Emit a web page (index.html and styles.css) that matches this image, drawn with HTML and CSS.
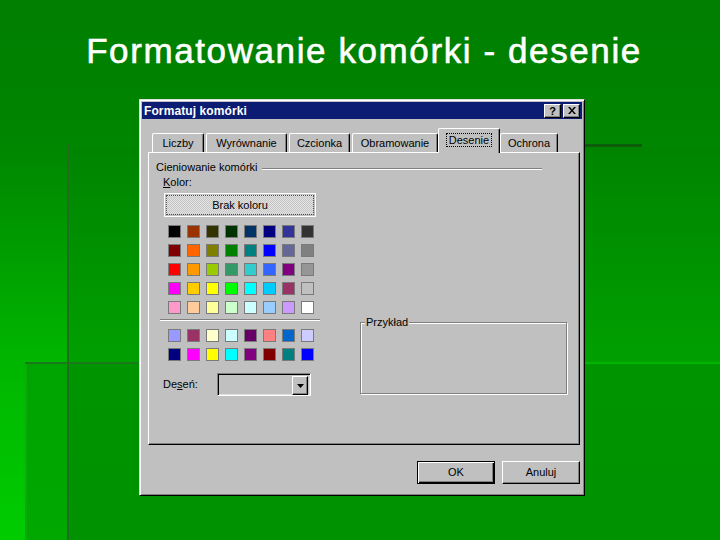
FILE: index.html
```html
<!DOCTYPE html>
<html lang="pl">
<head>
<meta charset="utf-8">
<link rel="stylesheet" href="styles.css">
</head>
<body>
<h1 class="slide-title">Formatowanie komórki - desenie</h1>
<div class="dialog">
  <div class="titlebar">
    <span class="title">Formatuj komórki</span>
    <div class="tb-buttons">
      <span class="tb-btn help">?</span>
      <span class="tb-btn close"><svg width="8" height="7" viewBox="0 0 8 7"><path d="M0 0h2l2 2.5L6 0h2L5 3.5 8 7H6L4 4.5 2 7H0l3-3.5z" fill="#000"/></svg></span>
    </div>
  </div>
  <div class="dlg-body">
    <div class="tabs">
      <div class="tab t-liczby">Liczby</div>
      <div class="tab t-wyr">Wyrównanie</div>
      <div class="tab t-czc">Czcionka</div>
      <div class="tab t-obr">Obramowanie</div>
      <div class="tab t-des active"><span class="focus">Desenie</span></div>
      <div class="tab t-och">Ochrona</div>
    </div>
    <div class="panel">
      <div class="group-head"><span class="group-title">Cieniowanie komórki</span><span class="etch"></span></div>
      <div class="content">
        <div class="left">
          <div class="lbl kolor"><u>K</u>olor:</div>
          <div class="nocolor"><div class="nocolor-in">Brak koloru</div></div>
          <div class="swatches main">
            <span class="sw" style="background:#000000"></span>
            <span class="sw" style="background:#993300"></span>
            <span class="sw" style="background:#333300"></span>
            <span class="sw" style="background:#003300"></span>
            <span class="sw" style="background:#003366"></span>
            <span class="sw" style="background:#000080"></span>
            <span class="sw" style="background:#333399"></span>
            <span class="sw" style="background:#333333"></span>
            <span class="sw" style="background:#800000"></span>
            <span class="sw" style="background:#ff6600"></span>
            <span class="sw" style="background:#808000"></span>
            <span class="sw" style="background:#008000"></span>
            <span class="sw" style="background:#008080"></span>
            <span class="sw" style="background:#0000ff"></span>
            <span class="sw" style="background:#666699"></span>
            <span class="sw" style="background:#808080"></span>
            <span class="sw" style="background:#ff0000"></span>
            <span class="sw" style="background:#ff9900"></span>
            <span class="sw" style="background:#99cc00"></span>
            <span class="sw" style="background:#339966"></span>
            <span class="sw" style="background:#33cccc"></span>
            <span class="sw" style="background:#3366ff"></span>
            <span class="sw" style="background:#800080"></span>
            <span class="sw" style="background:#969696"></span>
            <span class="sw" style="background:#ff00ff"></span>
            <span class="sw" style="background:#ffcc00"></span>
            <span class="sw" style="background:#ffff00"></span>
            <span class="sw" style="background:#00ff00"></span>
            <span class="sw" style="background:#00ffff"></span>
            <span class="sw" style="background:#00ccff"></span>
            <span class="sw" style="background:#993366"></span>
            <span class="sw" style="background:#c0c0c0"></span>
            <span class="sw" style="background:#ff99cc"></span>
            <span class="sw" style="background:#ffcc99"></span>
            <span class="sw" style="background:#ffff99"></span>
            <span class="sw" style="background:#ccffcc"></span>
            <span class="sw" style="background:#ccffff"></span>
            <span class="sw" style="background:#99ccff"></span>
            <span class="sw" style="background:#cc99ff"></span>
            <span class="sw" style="background:#ffffff"></span>
          </div>
          <div class="sep"></div>
          <div class="swatches extra">
            <span class="sw" style="background:#9999ff"></span>
            <span class="sw" style="background:#993366"></span>
            <span class="sw" style="background:#ffffcc"></span>
            <span class="sw" style="background:#ccffff"></span>
            <span class="sw" style="background:#660066"></span>
            <span class="sw" style="background:#ff8080"></span>
            <span class="sw" style="background:#0066cc"></span>
            <span class="sw" style="background:#ccccff"></span>
            <span class="sw" style="background:#000080"></span>
            <span class="sw" style="background:#ff00ff"></span>
            <span class="sw" style="background:#ffff00"></span>
            <span class="sw" style="background:#00ffff"></span>
            <span class="sw" style="background:#800080"></span>
            <span class="sw" style="background:#800000"></span>
            <span class="sw" style="background:#008080"></span>
            <span class="sw" style="background:#0000ff"></span>
          </div>
          <div class="pattern-row">
            <span class="lbl">De<u>s</u>eń:</span>
            <div class="combo">
              <span class="combo-btn"><svg width="7" height="4" viewBox="0 0 7 4"><path d="M0 0h7L3.5 4z" fill="#000"/></svg></span>
            </div>
          </div>
        </div>
        <div class="right">
          <div class="sample"><span class="sample-legend">Przykład</span></div>
        </div>
      </div>
    </div>
    <div class="buttons">
      <div class="btn default">OK</div>
      <div class="btn">Anuluj</div>
    </div>
  </div>
</div>
</body>
</html>
```

FILE: styles.css
```css
html, body {
  margin: 0;
  padding: 0;
}
body {
  width: 720px;
  height: 540px;
  overflow: hidden;
  font-family: "Liberation Sans", Arial, sans-serif;
  background:
    linear-gradient(#1e6e1e, #1e6e1e) 67px 144px / 2px 396px no-repeat,
    linear-gradient(#0c5c0c, #0c5c0c) 585px 144px / 57px 3px no-repeat,
    linear-gradient(#1a7a1a, #1a7a1a) 25px 362px / 114px 2px no-repeat,
    linear-gradient(#10a810, #10a810) 25px 364px / 2px 176px no-repeat,
    linear-gradient(#009400, #009200) 69px 364px / 651px 176px no-repeat,
    linear-gradient(#00a400, #00a800) 27px 364px / 40px 176px no-repeat,
    linear-gradient(#008400, #00a000) 69px 147px / 651px 215px no-repeat,
    linear-gradient(to bottom, #007e00 0%, #008600 27%, #00b600 67%, #00cc00 100%);
}

.slide-title {
  margin: 0;
  height: 99px;
  box-sizing: border-box;
  padding: 31px 0 0 8px;
  font-size: 35px;
  line-height: 40px;
  letter-spacing: 1.6px;
  font-weight: normal;
  -webkit-text-stroke: 0.6px #fff;
  color: #fff;
  text-align: center;
}

.dialog {
  margin-left: 139px;
  width: 446px;
  height: 397px;
  box-sizing: border-box;
  background: #c0c0c0;
  border-top: 1px solid #dfdfdf;
  border-left: 1px solid #dfdfdf;
  border-right: 1px solid #000;
  border-bottom: 1px solid #000;
  box-shadow: inset 1px 1px #fff, inset -1px -1px #808080;
  padding: 2px;
  font-size: 11px;
  color: #000;
}

.titlebar {
  height: 17px;
  background: #0b1c72;
  display: flex;
  align-items: center;
  justify-content: space-between;
  padding: 0 2px 0 2px;
}
.title {
  color: #fff;
  font-weight: bold;
  font-size: 12px;
  letter-spacing: 0.1px;
}
.tb-buttons {
  display: flex;
  gap: 2px;
}
.tb-btn {
  width: 17px;
  height: 14px;
  box-sizing: border-box;
  background: #c0c0c0;
  border-top: 1px solid #fff;
  border-left: 1px solid #fff;
  border-right: 1px solid #000;
  border-bottom: 1px solid #000;
  box-shadow: inset -1px -1px #808080;
  display: flex;
  align-items: center;
  justify-content: center;
  font-weight: bold;
  font-size: 11px;
  line-height: 12px;
}

.dlg-body {
  padding: 9px 3px 0 6px;
}

.tabs {
  display: flex;
  align-items: flex-end;
  height: 24px;
  padding-left: 4px;
}
.tab {
  height: 19px;
  box-sizing: border-box;
  border-top: 1px solid #fff;
  border-left: 1px solid #fff;
  border-right: 1px solid #000;
  border-radius: 2px 2px 0 0;
  box-shadow: inset -1px 0 #808080;
  margin-right: 2px;
  text-align: center;
  line-height: 18px;
  background: #c0c0c0;
}
.t-liczby { width: 52px; }
.t-wyr { width: 81px; }
.t-czc { width: 61px; }
.t-obr { width: 86px; }
.t-och { width: 58px; }
.tab.active {
  width: 62px;
  height: 25px;
  margin: 0 0 -1px -2px;
  position: relative;
  z-index: 1;
  line-height: 20px;
  padding-top: 1px;
}
.focus {
  outline: 1px dotted #000;
  outline-offset: 0;
  padding: 0 2px;
}

.panel {
  width: 432px;
  height: 293px;
  box-sizing: border-box;
  border-top: 1px solid #fff;
  border-left: 1px solid #fff;
  border-right: 1px solid #000;
  border-bottom: 1px solid #000;
  box-shadow: inset -1px -1px #808080;
  padding: 8px 0 0 7px;
}

.group-head {
  display: flex;
  align-items: center;
  height: 13px;
  line-height: 13px;
  margin-right: 37px;
}
.group-title {
  padding-right: 4px;
}
.etch {
  flex: 1;
  height: 0;
  border-top: 1px solid #808080;
  border-bottom: 1px solid #fff;
  margin-top: 2px;
}

.content {
  display: flex;
}
.left {
  width: 162px;
}
.lbl {
  line-height: 13px;
}
.kolor {
  margin: 2px 0 0 7px;
}
.nocolor {
  margin: 4px 0 0 8px;
  width: 152px;
  height: 24px;
  box-sizing: border-box;
  border: 1px solid #fff;
  padding: 1px;
}
.nocolor-in {
  height: 100%;
  box-sizing: border-box;
  border: 1px dotted #505050;
  background: repeating-conic-gradient(#c4c4c4 0 25%, #e4e4e4 0 50%) 0 0 / 2px 2px;
  text-align: center;
  line-height: 18px;
}

.swatches {
  display: grid;
  grid-template-columns: repeat(8, 13px);
  grid-auto-rows: 13px;
  gap: 6px;
  margin-left: 12px;
}
.swatches.main { margin-top: 8px; }
.swatches.extra { margin-top: 8px; }
.sw {
  display: block;
  box-sizing: border-box;
  border: 1px solid #7a7a7a;
}
.sep {
  margin: 5px 0 0 4px;
  width: 160px;
  border-top: 1px solid #808080;
  border-bottom: 1px solid #fff;
}

.pattern-row {
  margin-top: 12px;
  display: flex;
  align-items: center;
  padding-left: 7px;
}
.pattern-row .lbl {
  width: 54px;
}
.combo {
  width: 94px;
  height: 23px;
  box-sizing: border-box;
  border-top: 1px solid #808080;
  border-left: 1px solid #808080;
  border-right: 1px solid #fff;
  border-bottom: 1px solid #fff;
  box-shadow: inset 1px 1px #000, inset -1px -1px #dfdfdf;
  background: #c0c0c0;
  display: flex;
  justify-content: flex-end;
  padding: 2px;
}
.combo-btn {
  width: 16px;
  height: 19px;
  box-sizing: border-box;
  border-top: 1px solid #fff;
  border-left: 1px solid #fff;
  border-right: 1px solid #000;
  border-bottom: 1px solid #000;
  box-shadow: inset -1px -1px #808080;
  background: #c0c0c0;
  display: flex;
  align-items: center;
  justify-content: center;
}

.right {
  margin-left: 42px;
  padding-top: 148px;
}
.sample {
  width: 207px;
  height: 72px;
  box-sizing: border-box;
  border: 1px solid #808080;
  box-shadow: inset 1px 1px #fff, 1px 1px #fff;
}
.sample-legend {
  display: inline-block;
  margin: -7px 0 0 4px;
  padding: 0 1px;
  line-height: 13px;
  background: #c0c0c0;
  vertical-align: top;
}

.buttons {
  width: 432px;
  margin-top: 16px;
  display: flex;
  justify-content: flex-end;
  gap: 7px;
}
.btn {
  width: 78px;
  height: 23px;
  box-sizing: border-box;
  border-top: 1px solid #fff;
  border-left: 1px solid #fff;
  border-right: 1px solid #000;
  border-bottom: 1px solid #000;
  box-shadow: inset -1px -1px #808080;
  text-align: center;
  line-height: 21px;
}
.btn.default {
  border: 1px solid #000;
  box-shadow: inset 1px 1px #fff, inset -1px -1px #000, inset -2px -2px #808080;
}
```
